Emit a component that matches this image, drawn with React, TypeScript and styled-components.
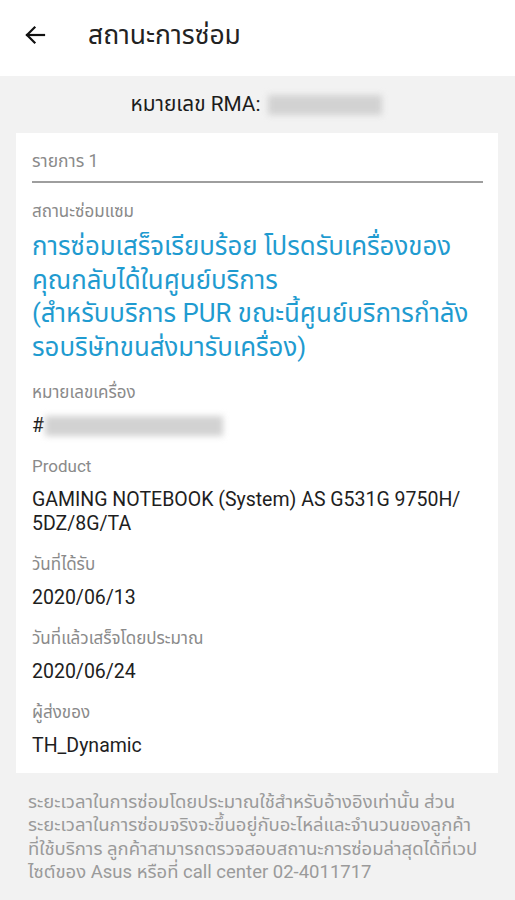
import React from 'react';
import styled, { createGlobalStyle } from 'styled-components';

const GlobalStyle = createGlobalStyle`
    html, body {
        margin: 0;
        padding: 0;
        background: #f2f2f2;
    }
    body {
        font-family: Roboto, "Noto Sans", "Noto Sans Thai", "DejaVu Sans", sans-serif;
        color: #222;
    }
`;

interface IField {
    label: string;
    value?: React.ReactNode;
    last?: boolean;
};

const Page = styled.div`
    width: 515px;
    min-height: 900px;
    background: #f2f2f2;
`;
const Header = styled.div`
    height: 76px;
    background: #fff;
    display: flex;
    align-items: center;
    padding-left: 23px;
    box-sizing: border-box;
`;
const BackButton = styled.div`
    width: 24px;
    height: 26px;
    display: flex;
    align-items: center;
    justify-content: center;
    margin-right: 41px;
    margin-top: -6px;
`;
const Title = styled.div`
    font-size: 26.5px;
    color: #222;
    margin-top: -4px;
`;
const RmaRow = styled.div`
    display: flex;
    align-items: center;
    justify-content: center;
    height: 57px;
    font-size: 20.8px;
    color: #1c1c1c;
    padding-right: 2px;
`;
const Blur = styled.div<{ w: number, ml: number }>`
    width: ${props => props.w}px;
    height: 20px;
    background: #d2d2d2;
    filter: blur(3px);
    margin-left: ${props => props.ml}px;
`;
const Card = styled.div`
    margin: 0 17px 0 16px;
    background: #fff;
    padding: 16px 15px 15px 16px;
`;
const ItemHeader = styled.div`
    font-size: 17.5px;
    line-height: 24px;
    color: #8a8a8a;
    padding-bottom: 8px;
    border-bottom: 2px solid #9e9e9e;
    margin-bottom: 16px;
`;
const FieldBlock = styled.div<{ last?: boolean }>`
    margin-bottom: ${props => props.last ? 0 : 16}px;
`;
const Label = styled.div`
    font-size: 17px;
    color: #8a8a8a;
    line-height: 24px;
    margin-bottom: 10px;
`;
const Value = styled.div`
    font-size: 19.5px;
    color: #1e1e1e;
    line-height: 24px;
`;
const StatusText = styled.div`
    font-size: 25.8px;
    color: #1f9bd0;
    line-height: 33.5px;
    margin-top: -3px;
`;
const HashRow = styled.div`
    display: flex;
    align-items: center;
`;
const Note = styled.div`
    font-size: 18.5px;
    color: #9a9a9a;
    line-height: 23.3px;
    padding: 18px 10px 20px 28px;
    white-space: nowrap;
`;

const Field: React.FC<IField> = (props: IField): JSX.Element => {
    return (
        <FieldBlock last={props.last}>
            <Label>{props.label}</Label>
            <Value>{props.value}</Value>
        </FieldBlock>
    )
}

const App: React.FC = (): JSX.Element => {
    return (
        <Page>
            <GlobalStyle/>
            <Header>
                <BackButton>
                    <svg width="22" height="20" viewBox="0 0 22 20" fill="none" stroke="#111" strokeWidth="2.2" strokeLinecap="square">
                        <path d="M20 10H3"/>
                        <path d="M10.5 2.5L3 10l7.5 7.5"/>
                    </svg>
                </BackButton>
                <Title>สถานะการซ่อม</Title>
            </Header>
            <RmaRow>
                หมายเลข RMA:
                <Blur w={114} ml={8}/>
            </RmaRow>
            <Card>
                <ItemHeader>รายการ 1</ItemHeader>
                <FieldBlock>
                    <Label>สถานะซ่อมแซม</Label>
                    <StatusText>
                        การซ่อมเสร็จเรียบร้อย โปรดรับเครื่องของ<br/>
                        คุณกลับได้ในศูนย์บริการ<br/>
                        (สำหรับบริการ PUR ขณะนี้ศูนย์บริการกำลัง<br/>
                        รอบริษัทขนส่งมารับเครื่อง)
                    </StatusText>
                </FieldBlock>
                <Field label="หมายเลขเครื่อง" value={<HashRow>#<Blur w={178} ml={1}/></HashRow>}/>
                <Field label="Product" value={<>GAMING NOTEBOOK (System) AS G531G 9750H/<br/>5DZ/8G/TA</>}/>
                <Field label="วันที่ได้รับ" value="2020/06/13"/>
                <Field label="วันที่แล้วเสร็จโดยประมาณ" value="2020/06/24"/>
                <Field label="ผู้ส่งของ" value="TH_Dynamic" last/>
            </Card>
            <Note>
                ระยะเวลาในการซ่อมโดยประมาณใช้สำหรับอ้างอิงเท่านั้น ส่วน<br/>
                ระยะเวลาในการซ่อมจริงจะขึ้นอยู่กับอะไหล่และจำนวนของลูกค้า<br/>
                ที่ใช้บริการ ลูกค้าสามารถตรวจสอบสถานะการซ่อมล่าสุดได้ที่เวป<br/>
                ไซต์ของ Asus หรือที่ call center 02-4011717
            </Note>
        </Page>
    )
}

export default App;
